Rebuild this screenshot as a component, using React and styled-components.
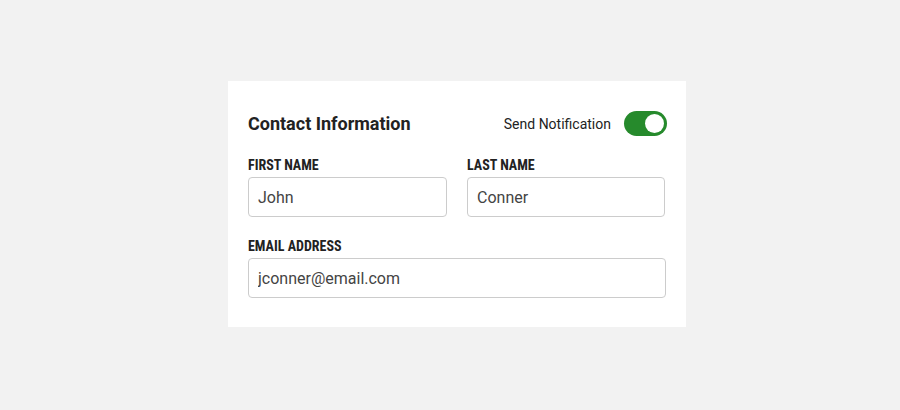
import React, { useState } from "react";
import styled, { createGlobalStyle } from "styled-components";

const Global = createGlobalStyle`
  html, body { margin: 0; padding: 0; background: #f2f2f2; }
  body { font-family: Roboto, "Liberation Sans", sans-serif; }
  * { box-sizing: border-box; }
`;

const Page = styled.div`
  width: 900px;
  height: 410px;
  display: flex;
  justify-content: center;
  padding-top: 81px;
  padding-left: 14px;
`;

const Card = styled.div`
  width: 458px;
  height: 246px;
  background: #fff;
  padding: 30px 20px 30px 20px;
  display: flex;
  flex-direction: column;
`;

const Header = styled.div`
  display: flex;
  align-items: center;
  justify-content: space-between;
  height: 26px;
  margin-bottom: 22px;
`;

const Title = styled.h2`
  margin: 0;
  font-size: 18px;
  font-weight: 700;
  color: #222;
`;

const NotifyWrap = styled.label`
  display: flex;
  align-items: center;
  gap: 13px;
  font-size: 14px;
  color: #222;
  margin-right: -1px;
`;

const Switch = styled.button`
  width: 43px;
  height: 25px;
  border-radius: 13px;
  border: none;
  padding: 0;
  background: ${p => (p.$on ? "#268a2c" : "#bbb")};
  position: relative;
  cursor: pointer;
  &::after {
    content: "";
    position: absolute;
    top: 3px;
    left: ${p => (p.$on ? "21px" : "3px")};
    width: 19px;
    height: 19px;
    border-radius: 50%;
    background: #fff;
  }
`;

const Row = styled.div`
  display: grid;
  grid-template-columns: ${p => (p.$cols === 2 ? "1fr 1fr" : "1fr")};
  column-gap: 20px;
  margin-bottom: ${p => p.$mb || 0}px;
`;

const Field = styled.div`
  display: flex;
  flex-direction: column;
`;

const Label = styled.label`
  font-family: "Roboto Condensed", Roboto, "Liberation Sans Narrow", sans-serif;
  font-stretch: condensed;
  font-size: 14px;
  font-weight: 700;
  color: #222;
  text-transform: uppercase;
  line-height: 14px;
  margin-bottom: 5px;
`;

const Input = styled.input`
  height: 40px;
  width: 100%;
  border: 1px solid #cccccc;
  border-radius: 4px;
  padding: 0 9px;
  font-family: Roboto, "Liberation Sans", sans-serif;
  font-size: 16px;
  color: #444;
  outline: none;
`;

export default function App() {
  const [on, setOn] = useState(true);
  return (
    <>
      <Global />
      <Page>
        <Card>
          <Header>
            <Title>Contact Information</Title>
            <NotifyWrap>
              Send Notification
              <Switch $on={on} onClick={() => setOn(!on)} aria-label="Send Notification" />
            </NotifyWrap>
          </Header>
          <Row $cols={2} $mb={22}>
            <Field>
              <Label>First Name</Label>
              <Input defaultValue="John" />
            </Field>
            <Field>
              <Label>Last Name</Label>
              <Input defaultValue="Conner" style={{ width: "calc(100% - 1px)" }} />
            </Field>
          </Row>
          <Row>
            <Field>
              <Label>Email Address</Label>
              <Input defaultValue="jconner@email.com" />
            </Field>
          </Row>
        </Card>
      </Page>
    </>
  );
}
